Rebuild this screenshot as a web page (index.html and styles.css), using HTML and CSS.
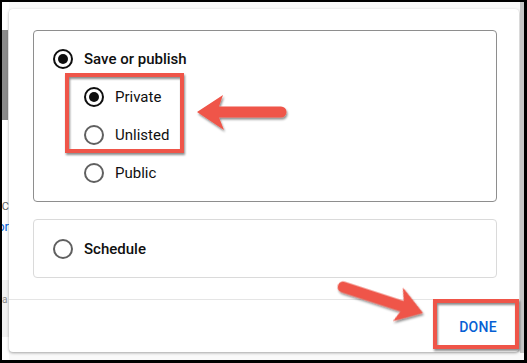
FILE: index.html
```html
<!DOCTYPE html>
<html>
<head>
<meta charset="utf-8">
<link rel="stylesheet" href="styles.css">
</head>
<body>
<div class="screen">
  <div class="backdrop">
    <div class="bd-bar"></div>
    <div class="bd-text bd-ac">AC</div>
    <div class="bd-text bd-link">or</div>
    <div class="bd-band"><span>a</span></div>
  </div>
  <div class="dialog">
    <div class="dialog-body">
      <div class="card card-main">
        <div class="option option-main">
          <span class="radio checked"></span>
          <span class="label strong">Save or publish</span>
        </div>
        <div class="sub-options">
          <div class="option">
            <span class="radio checked"></span>
            <span class="label">Private</span>
          </div>
          <div class="option">
            <span class="radio"></span>
            <span class="label">Unlisted</span>
          </div>
          <div class="option">
            <span class="radio"></span>
            <span class="label">Public</span>
          </div>
        </div>
      </div>
      <div class="card card-schedule">
        <div class="option">
          <span class="radio"></span>
          <span class="label strong">Schedule</span>
        </div>
      </div>
    </div>
    <div class="dialog-footer">
      <button class="done-btn">DONE</button>
    </div>
  </div>
  <div class="scrollbar"></div>

  <svg class="annotations" viewBox="2 2 522 358" width="522" height="358" xmlns="http://www.w3.org/2000/svg">
    <defs>
      <filter id="sh" x="-20%" y="-20%" width="140%" height="140%">
        <feDropShadow dx="1" dy="2" stdDeviation="1.2" flood-color="#000" flood-opacity="0.45"/>
      </filter>
      <path id="arrow" d="M0 0 L26 -17 L22 -5.5 L84 -5.5 A5.5 5.5 0 0 1 84 5.5 L22 5.5 L27 18 Z"/>
    </defs>
    <g filter="url(#sh)" fill="none" stroke="#ef5548" stroke-width="4">
      <rect x="67" y="75" width="115" height="76"/>
      <rect x="435" y="301" width="82" height="46"/>
    </g>
    <g filter="url(#sh)" fill="#ef5548">
      <use href="#arrow" transform="translate(197 112)"/>
      <use href="#arrow" transform="translate(423 313) rotate(198)"/>
    </g>
  </svg>
</div>
</body>
</html>
```

FILE: styles.css
```css
html, body {
  margin: 0;
  padding: 0;
}
body {
  background: #000;
  padding: 2px 3px 3px 2px;
  width: 522px;
  height: 358px;
  font-family: Roboto, "Liberation Sans", sans-serif;
}
.screen {
  position: relative;
  width: 522px;
  height: 358px;
  background: #f9f9f9;
  display: flex;
  overflow: hidden;
}
.backdrop {
  width: 7px;
  flex: none;
  display: flex;
  flex-direction: column;
  overflow: hidden;
  background: #fff;
}
.bd-bar {
  width: 6px;
  height: 90px;
  margin-top: 28px;
  background: #8a8a8a;
}
.bd-text {
  white-space: nowrap;
  display: flex;
  justify-content: flex-end;
  width: 7px;
  overflow: hidden;
}
.bd-ac {
  margin-top: 80px;
  font-size: 11px;
  color: #606060;
  line-height: 14px;
}
.bd-link {
  margin-top: 5px;
  font-size: 13px;
  line-height: 16px;
  color: #065fd4;
}
.bd-band {
  margin-top: 45px;
  height: 57px;
  background: #f1f1f1;
  font-size: 10px;
  color: #8a8a8a;
  line-height: 12px;
}
.bd-band span {
  display: block;
  padding-top: 14px;
}
.dialog {
  width: 510px;
  height: 343px;
  margin-top: 7px;
  flex: none;
  display: flex;
  flex-direction: column;
  background: #fff;
  border-radius: 4px;
  box-shadow: 0 1px 3px rgba(0,0,0,0.35);
}
.dialog-body {
  height: 290px;
  box-sizing: border-box;
  padding: 21px 22px 21px 24px;
  display: flex;
  flex-direction: column;
  gap: 17px;
}
.card {
  box-sizing: border-box;
  border-radius: 4px;
  padding-left: 19px;
}
.card-main {
  height: 172px;
  border: 1px solid #8e8e8e;
  padding-top: 18px;
}
.card-schedule {
  height: 59px;
  border: 1px solid #dadada;
  display: flex;
  align-items: center;
}
.sub-options {
  margin-left: 31px;
  margin-top: 18px;
  display: flex;
  flex-direction: column;
  gap: 18px;
}
.option {
  display: flex;
  align-items: center;
  gap: 11px;
  height: 20px;
}
.radio {
  width: 20px;
  height: 20px;
  box-sizing: border-box;
  border: 2px solid #606060;
  border-radius: 50%;
  display: flex;
  align-items: center;
  justify-content: center;
  flex: none;
}
.radio.checked {
  border-color: #0f0f0f;
}
.radio.checked::after {
  content: "";
  width: 10px;
  height: 10px;
  border-radius: 50%;
  background: #0f0f0f;
}
.label {
  font-size: 15px;
  color: #0f0f0f;
  line-height: 20px;
}
.label.strong {
  font-weight: 500;
}
.dialog-footer {
  flex: 1;
  border-top: 1px solid #e5e5e5;
  display: flex;
  justify-content: flex-end;
  align-items: center;
  padding-right: 6px;
  padding-top: 2px;
}
.done-btn {
  border: none;
  background: none;
  font-family: Roboto, "Liberation Sans", sans-serif;
  font-size: 14px;
  font-weight: 500;
  color: #065fd4;
  letter-spacing: 0.3px;
  padding: 8px 16px;
}
.scrollbar {
  width: 4px;
  margin-left: 1px;
  height: 351px;
  background: #c6c6c6;
  flex: none;
}
.annotations {
  position: absolute;
  left: 0;
  top: 0;
  pointer-events: none;
  overflow: visible;
}
```
